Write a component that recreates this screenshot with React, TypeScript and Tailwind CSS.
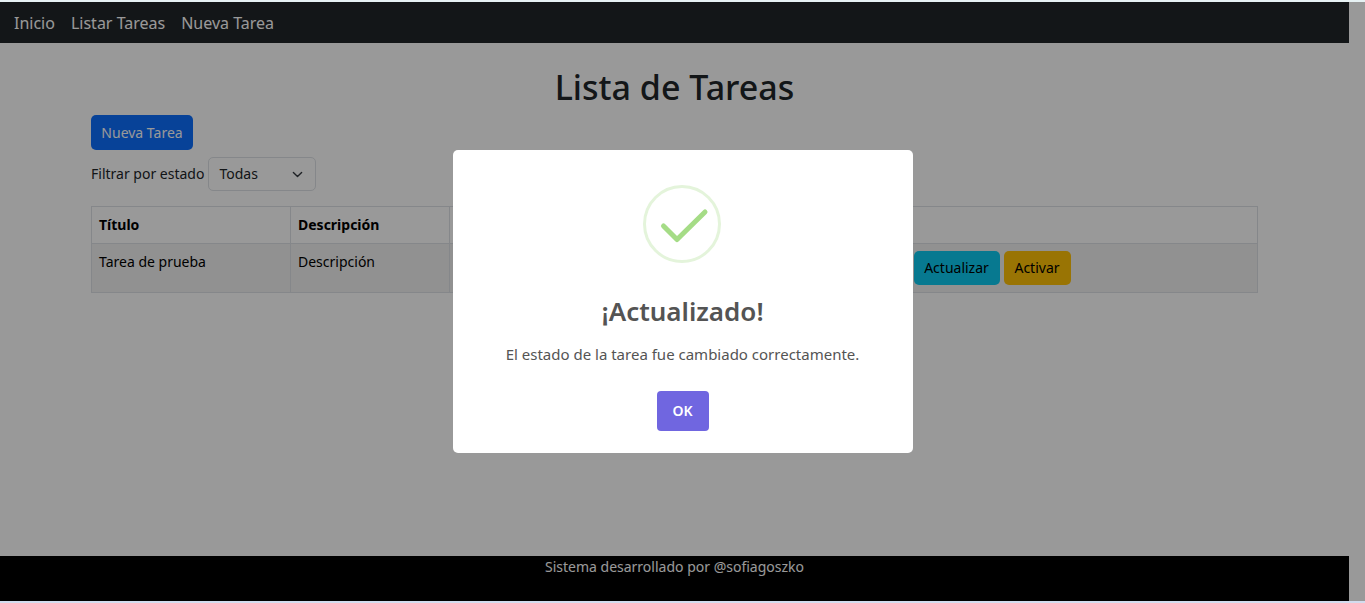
import { useState } from "react";

const links = ["Inicio", "Listar Tareas", "Nueva Tarea"];

function NavBar() {
  return (
    <nav className="flex h-[41px] items-center gap-4 bg-[#212529] px-[14px] pt-px text-[16px] text-white">
      {links.map((label) => (
        <a key={label} href="#">
          {label}
        </a>
      ))}
    </nav>
  );
}

function StatusFilter() {
  return (
    <div className="mt-[7px] flex items-center gap-1">
      <label htmlFor="estado">Filtrar por estado</label>
      <div className="relative">
        <select
          id="estado"
          className="h-[34px] w-[108px] appearance-none rounded-[5px] border border-[#dee2e6] bg-white px-[10px] text-[#212529]"
        >
          <option>Todas</option>
        </select>
        <svg
          viewBox="0 0 16 16"
          className="pointer-events-none absolute top-3 right-[13px] size-[11px]"
          fill="none"
          stroke="#343a40"
          strokeWidth="2"
          strokeLinecap="round"
          strokeLinejoin="round"
        >
          <path d="m2 5 6 6 6-6" />
        </svg>
      </div>
    </div>
  );
}

function TaskTable() {
  return (
    <table className="mt-[15px] w-full table-fixed border-collapse text-left align-top text-black">
      <colgroup>
        <col className="w-[199px]" />
        <col className="w-[159px]" />
        <col />
        <col className="w-[351px]" />
      </colgroup>
      <thead>
        <tr className="h-[37px]">
          <th className="border border-[#dee2e6] px-[7px] font-bold">Título</th>
          <th className="border border-[#dee2e6] px-[7px] font-bold">Descripción</th>
          <th className="border-y border-[#dee2e6]" />
          <th className="border-y border-r border-[#dee2e6]" />
        </tr>
      </thead>
      <tbody>
        <tr className="bg-[#f2f2f2] align-top">
          <td className="border border-[#dee2e6] p-[7px]">Tarea de prueba</td>
          <td className="border border-[#dee2e6] p-[7px]">Descripción</td>
          <td className="border-y border-[#dee2e6]" />
          <td className="border-y border-r border-[#dee2e6] p-[7px]">
            <div className="flex gap-1">
              <button className="h-[34px] w-[86px] rounded-[5px] bg-[#0dcaf0]">Actualizar</button>
              <button className="h-[34px] w-[67px] rounded-[5px] bg-[#ffc107]">Activar</button>
            </div>
          </td>
        </tr>
      </tbody>
    </table>
  );
}

function SuccessIcon() {
  return (
    <svg viewBox="0 0 80 80" className="size-20" fill="none" aria-hidden="true">
      <circle cx="39" cy="39" r="37.5" stroke="#e4f4db" strokeWidth="3" />
      <path
        d="M20.5 41 34 54.5 62 27"
        stroke="#a5dc86"
        strokeWidth="5"
        strokeLinecap="round"
        strokeLinejoin="round"
      />
    </svg>
  );
}

function SuccessDialog({ onClose }: { onClose: () => void }) {
  return (
    <div className="fixed inset-x-0 inset-y-[2px] flex items-center justify-center bg-black/40">
      <div
        role="dialog"
        aria-modal="true"
        aria-labelledby="dialog-title"
        className="flex w-[460px] flex-col items-center rounded-[5px] bg-white pt-[35px] pb-[22px] text-[#545454]"
      >
        <SuccessIcon />
        <h2 id="dialog-title" className="mt-7 text-[26px] leading-9 font-semibold">
          ¡Actualizado!
        </h2>
        <p className="mt-[13px] text-[15px] leading-6">
          El estado de la tarea fue cambiado correctamente.
        </p>
        <button
          onClick={onClose}
          className="mt-[25px] h-10 w-[52px] rounded-[4px] bg-[#7066e0] text-[14px] font-semibold text-white"
        >
          OK
        </button>
      </div>
    </div>
  );
}

export default function App() {
  const [open, setOpen] = useState(true);
  return (
    <div className="flex min-h-screen flex-col border-t-2 border-b-2 border-t-[#e6f1f3] border-b-[#d3dcee] bg-white pr-4 font-['Noto_Sans','Open_Sans',sans-serif] text-[14px] leading-[22px] text-[#212529]">
      <NavBar />
      <main className="mx-auto w-full max-w-[1167px] grow pt-6">
        <h1 className="text-center text-[34px] leading-[41px] font-medium">Lista de Tareas</h1>
        <a
          href="#"
          className="mt-[7px] flex h-[35px] w-[102px] items-center justify-center rounded-[5px] bg-[#0d6efd] text-white"
        >
          Nueva Tarea
        </a>
        <StatusFilter />
        <TaskTable />
      </main>
      <footer className="h-[45px] bg-black text-center text-white">
        Sistema desarrollado por @sofiagoszko
      </footer>
      {open && <SuccessDialog onClose={() => setOpen(false)} />}
    </div>
  );
}
